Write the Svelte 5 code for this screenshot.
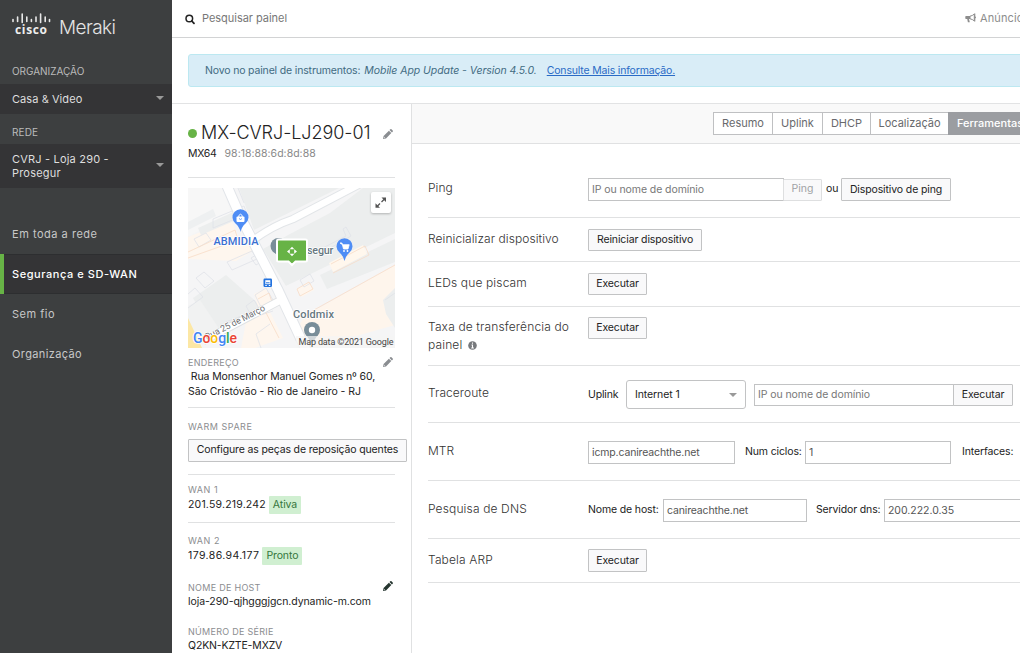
<script>
  const nav = ['Em toda a rede', 'Segurança e SD-WAN', 'Sem fio', 'Organização'];
  const tabs = [
    { name: 'Resumo', w: 60 },
    { name: 'Uplink', w: 51 },
    { name: 'DHCP', w: 49 },
    { name: 'Localização', w: 79 },
    { name: 'Ferramentas', w: 84 }
  ];
  const active = 'Segurança e SD-WAN';
</script>

{#snippet pencil(color)}
  <svg class="pencil" width="10" height="10" viewBox="0 0 10 10" fill={color}>
    <path d="M0 10 .6 7 5.9 1.7 8.300 4.100 3 9.400zM6.500 1.100 7.300.3q.6-.5 1.200 0l1.200 1.200q.5.6 0 1.200l-.8.8z" />
    <path d="M1 8.200l.9.8" stroke="#fff" stroke-width=".7" />
  </svg>
{/snippet}

<div class="page">
  <aside>
    <div class="logo">
      <svg width="110" height="28" viewBox="0 0 110 28">
        <g stroke="#e8e8e8" stroke-width="1.600" stroke-linecap="round">
          <path d="M1 7.500v2M5.600 5v4.500M10.200 2v8.500M14.800 5v4.500M19.400 7.500v2M24 5v4.500M28.600 2v8.500M33.200 5v4.500M37.500 7.500v2" />
        </g>
        <text x="3" y="21.500" class="cisco" textLength="32">cisco</text>
        <text x="47" y="21.500" class="meraki" textLength="57">Meraki</text>
      </svg>
    </div>
    <div class="cap org">ORGANIZAÇÃO</div>
    <div class="pick"><span>Casa &amp; Video</span><i class="caret"></i></div>
    <div class="cap net">REDE</div>
    <div class="pick tall"><span>CVRJ - Loja 290 -<br />Prosegur</span><i class="caret"></i></div>
    <nav>
      {#each nav as item}
        <div class="item" class:active={item === active}>{item}</div>
      {/each}
    </nav>
  </aside>

  <main>
    <header>
      <svg width="11" height="11" viewBox="0 0 11 11" fill="none" stroke="#222">
        <circle cx="4.300" cy="4.500" r="3.300" stroke-width="1.500" />
        <path d="M6.800 7l2.200 2.400" stroke-width="1.800" stroke-linecap="round" />
      </svg>
      <span class="search">Pesquisar painel</span>
      <div class="news">
        <svg width="11" height="10" viewBox="0 0 11 10">
          <path d="M1 3h4v3H4l.8 3.200H2.900L2.200 6H1Q.3 6 .3 5.300V3.700Q.3 3 1 3z" fill="#8d8d8d" />
          <path d="M5 3.200Q7.600 2.800 9.300 1v7Q7.600 6.200 5 5.800z" fill="#fff" stroke="#8d8d8d" stroke-width="1" />
          <path d="M9.800.5v8M10.400 3.700v1.500" stroke="#8d8d8d" />
        </svg>
        <span>Anúncios</span>
      </div>
    </header>

    <div class="bannerwrap">
      <div class="banner">
        <span class="b1">Novo no painel de instrumentos:</span>
        <em>Mobile App Update - Version 4.5.0.</em>
        <u>Consulte Mais informação.</u>
      </div>
    </div>

    <div class="cols">
      <section class="device">
        <div class="title"><i class="dot"></i><h1>MX-CVRJ-LJ290-01</h1>{@render pencil('#8a8d91')}</div>
        <div class="model"><span class="mx">MX64</span><span class="mac">98:18:88:6d:8d:88</span></div>
        <hr />
        <div class="map">
          <svg width="207" height="160" viewBox="0 0 207 160">
            <rect width="207" height="160" fill="#f5f5f6" />
            <path d="M0 0h36l7 25-43 24z" fill="#f7f7f7" />
            <path d="M51 0h100L66 42z" fill="#eceeee" />
            <path d="M175 0h32v52L98 98 75 61l27-15 40-21z" fill="#eceeee" />
            <path d="M0 49l43-17 10 23 17 5-22 13L0 71z" fill="#fef6ee" />
            <path d="M10 40l40-18 3 8-40 17z" fill="#eceeee" />
            <path d="M0 34l25-13 3 7L0 42z" fill="#eef0f1" />
            <path d="M5 110l33-23 35 31-47 31z" fill="#eceeee" />
            <path d="M0 118l12-6 20 30-32 18z" fill="#f1f2f2" />
            <path d="M66 106l12-6 6 15-13 7zM58 134l23-12 14 28-28 10H53z" fill="#fef6ee" />
            <path d="M98 98l109-53v12L112 128z" fill="#f5f5f6" />
            <path d="M132 87l75-36v23l-68 27z" fill="#eceeee" />
            <path d="M117 128l90-51v60l-81 23-19-16z" fill="#fef5ec" />
            <path d="M195 112l12-12v40l-9-14z" fill="#eceeee" />
            <path d="M109 101l12-7 5 8-12 7z" fill="#fef6ee" />
            <path d="M141 75l34-18 4 9-34 18z" fill="#fff7ed" />
            <g fill="none" stroke="#dfe2e8" stroke-width=".8">
              <path d="M6 51l12-6 5 7-12 7zM25 31l31-13 3 8-34 14zM39 74l25-11 5 8-25 11zM8 90l8-6 10 9-9 7zM63 70l5-3 5 7-5 3zM58 118l8-6 6 10-8 7zM67 107l11-7 7 12-12 7zM0 106l7-6 8 9-15 11M38 134l18-7M57 132l28-9M82 136l-14 10 5 14M112 92l10-6 4 7-10 6zM50 0l6 15" />
              <path d="M103 76l28-14 27-14-3-7 3-2 5 9-31 18M197 112l10-7" />
            </g>
            <g fill="none" stroke="#f8dcc6" stroke-width=".8">
              <path d="M0 64l47-22 4 13M0 70l42-15M109 101l12-7 4 7-13 7zM143 76l34-18 4 9-36 18M117 127l90-50M49 134l26-15 16 31M70 111l11-6 3 9-9 6" />
            </g>
            <path d="M39-2L53 30 90 102 119 164" fill="none" stroke="#e2e5e9" stroke-width="11" />
            <path d="M64 53Q84 38 105 31L172-4" fill="none" stroke="#e2e5e8" stroke-width="8.500" />
            <path d="M93 112L15 153" fill="none" stroke="#dfe2e4" stroke-width="8.500" />
            <path d="M39-2L53 30 90 102 119 164" fill="none" stroke="#fff" stroke-width="9" />
            <path d="M64 53Q84 38 105 31L172-4" fill="none" stroke="#fff" stroke-width="6.500" />
            <path d="M95 111L15 153" fill="none" stroke="#fff" stroke-width="6.500" />
            <path d="M0 130l14 30H0z" fill="#fce7a4" />

            <path d="M52.500 44Q51.500 39 47.500 35.500A8 8 0 1 1 57.500 35.500Q53.500 39 52.500 44z" fill="#4f8df5" />
            <rect x="48.500" y="28.500" width="8" height="5.500" rx="1" fill="#fff" />
            <path d="M50.800 29v-1.500q1.700-2.600 3.400 0V29" fill="none" stroke="#fff" stroke-width="1" />
            <path d="M51 30.500q1.500 2 3 0" fill="none" stroke="#4f8df5" stroke-width=".8" />
            <path d="M156.500 73Q155.500 68 151.500 64.500A8 8 0 1 1 161.500 64.500Q157.500 68 156.500 73z" fill="#4f8df5" />
            <path d="M152 55h2l1.500 6h4.500l1.200-4.300h-6.500z" fill="#fff" stroke="#fff" stroke-width=".8" />
            <circle cx="156" cy="63" r=".9" fill="#fff" /><circle cx="159.500" cy="63" r=".9" fill="#fff" />
            <circle cx="90.500" cy="58" r="8" fill="#788d99" />
            <path d="M84 62q5 4 6.500 9l3-6z" fill="#788d99" />
            <rect x="75.500" y="90.500" width="8.500" height="8.500" rx="1.200" fill="#2373df" />
            <rect x="77.300" y="92.200" width="5" height="4" fill="#fff" /><path d="M77.300 97.500h1.500M80.800 97.500h1.500" stroke="#fff" /><path d="M78 94.800h3.600" stroke="#2373df" />
            <circle cx="124" cy="142" r="8" fill="#788d99" />
            <path d="M119 148l5 8 5-8z" fill="#788d99" />
            <circle cx="124" cy="142" r="3.200" fill="#fff" />
            <g class="halo">
              <text x="25.500" y="57" textLength="45" class="place" fill="#3b6fd2">ABMIDIA</text>
              <text x="119" y="66" textLength="26.500" class="place" fill="#66777f">segur</text>
              <text x="105" y="130" textLength="41" class="place" fill="#66777f">Coldmix</text>
              <text transform="translate(19 152) rotate(-27)" textLength="66" class="street">Rua 25 de Março</text>
            </g>
            <path d="M90.500 51.500h27q1.500 0 1.500 1.500v19q0 1.500-1.500 1.500h-10l-3.500 3.500-3.500-3.500H90.500q-1.500 0-1.500-1.500V53q0-1.500 1.500-1.500z" fill="#67b346" stroke="#fff" stroke-width="2" />
            <path d="M104 58.700l2.300 2.500h-4.600zM104 68.300l2.300-2.500h-4.600zM99 63.500l2.800-2.300v4.600zM109 63.500l-2.800-2.300v4.600z" fill="#fff" />
            <circle cx="104" cy="63.500" r=".9" fill="#67b346" />
            <text x="5" y="155" class="google" textLength="44"><tspan fill="#4285f4">G</tspan><tspan fill="#ea4335">o</tspan><tspan fill="#fbbc05">o</tspan><tspan fill="#4285f4">g</tspan><tspan fill="#34a853">l</tspan><tspan fill="#ea4335">e</tspan></text>
            <rect x="108" y="148" width="99" height="12" fill="#f5f5f5" opacity=".7" />
            <text x="110.500" y="157" class="credit" textLength="95">Map data ©2021 Google</text>
            <rect x="183" y="4" width="20" height="21" rx="2" fill="#fff" class="shadow" />
            <path d="M193.500 9.500h4.500v4.500zM187.500 15.300v4.500h4.500z" fill="#555" /><path d="M196.500 11l-3 3M189 18.500l3-3" stroke="#555" stroke-width="1.300" />
          </svg>
        </div>
        <div class="lab addr"><span>ENDEREÇO</span>{@render pencil('#8a8d91')}</div>
        <div class="val address">&nbsp;Rua Monsenhor Manuel Gomes nº 60,<br /><span class="city">São Cristóvão - Rio de Janeiro - RJ</span></div>
        <hr />
        <div class="lab spare">WARM SPARE</div>
        <button class="sparebtn">Configure as peças de reposição quentes</button>
        <hr class="h3" />
        <div class="lab wan1">WAN 1</div>
        <div class="val wan"><span>201.59.219.242</span><b>Ativa</b></div>
        <hr class="h4" />
        <div class="lab wan2">WAN 2</div>
        <div class="val wan"><span class="ip2">179.86.94.177</span><b>Pronto</b></div>
        <div class="lab host"><span>NOME DE HOST</span>{@render pencil('#25352f')}</div>
        <div class="val hostname">loja-290-qjhgggjgcn.dynamic-m.com</div>
        <div class="lab serial">NÚMERO DE SÉRIE</div>
        <div class="val sn">Q2KN-KZTE-MXZV</div>
      </section>

      <section class="tools">
        <div class="tabbar">
          {#each tabs as t}
            <div class="tab" class:on={t.name === 'Ferramentas'} style="width:{t.w}px">{t.name}</div>
          {/each}
        </div>
        <div class="rows">
          <div class="row r1"><label>Ping</label>
            <div class="ctl"><div class="inp ph w196">IP ou nome de domínio</div><button class="off">Ping</button><span class="ou">ou</span><button class="w110 t23">Dispositivo de ping</button></div>
          </div>
          <div class="row r2"><label>Reinicializar dispositivo</label><div class="ctl"><button class="w114">Reiniciar dispositivo</button></div></div>
          <div class="row r3"><label>LEDs que piscam</label><div class="ctl"><button class="run">Executar</button></div></div>
          <div class="row r4"><label>Taxa de transferência do painel
              <svg class="info" width="9" height="9" viewBox="0 0 9 9"><circle cx="4.500" cy="4.500" r="4.300" fill="#77797c" /><path d="M4.500 1.500v1.300M3.500 4h1v3M3.200 7h2.700" stroke="#fff" stroke-width="1.100" fill="none" /></svg></label>
            <div class="ctl"><button class="run">Executar</button></div></div>
          <div class="row r5"><label>Traceroute</label>
            <div class="ctl"><span class="upl">Uplink</span><div class="select">Internet 1<i class="caret"></i></div><div class="inp ph w200">IP ou nome de domínio</div><button class="run join">Executar</button></div>
          </div>
          <div class="row r6"><label>MTR</label>
            <div class="ctl"><div class="inp w147 icmp">icmp.canireachthe.net</div><span class="num">Num ciclos:</span><div class="inp w146">1</div><span class="ifs">Interfaces:</span></div>
          </div>
          <div class="row r7"><label>Pesquisa de DNS</label>
            <div class="ctl"><span class="hn">Nome de host:</span><div class="inp w144 icmp">canireachthe.net</div><span class="sd">Servidor dns:</span><div class="inp w146">200.222.0.35</div></div>
          </div>
          <div class="row r8"><label>Tabela ARP</label><div class="ctl"><button class="run">Executar</button></div></div>
        </div>
      </section>
    </div>
  </main>
</div>

<style>
  :global(body) { margin: 0; overflow: hidden; }
  .page { display: flex; width: 1020px; height: 653px; overflow: hidden; font: 11px/14px Inter, sans-serif; color: #222; background: #fff; white-space: nowrap; }
  .page * { box-sizing: border-box; }
  svg { display: block; flex: none; }
  aside { width: 172px; flex: none; background: #3d3f40; color: #d4d4d4; }
  .logo { height: 64px; padding: 12px 0 0 12px; }
  .cisco { font: 700 12px 'Open Sans', sans-serif; fill: #eee; }
  .meraki { font: 300 19px Inter, sans-serif; fill: #e4e4e4; }
  .cap { padding-left: 12px; font-size: 10px; color: #bbb; letter-spacing: -.03px; }
  .org { height: 20px; }
  .net { height: 30px; line-height: 37px; letter-spacing: .15px; }
  .pick { display: flex; align-items: center; justify-content: space-between; height: 30px; padding: 0 8px 0 12px; background: #343436; letter-spacing: .07px; color: #dedede; }
  .tall { height: 44px; padding-bottom: 1px; letter-spacing: .19px; }
  .pick .caret { position: relative; top: -1px; }
  .caret { width: 0; border: 4px solid transparent; border-top-color: #999; border-bottom: 0; }
  nav { padding-top: 26px; }
  .item { height: 40px; padding-left: 12px; line-height: 40px; letter-spacing: .52px; color: #c8c8c8; }
  .item:last-child { letter-spacing: .38px; }
  .item.active { padding-left: 8px; border-left: 4px solid #67b346; background: #343436; color: #fff; font-weight: 500; letter-spacing: .56px; box-shadow: inset 0 1px #2d2e30, inset 0 -1px #2d2e30; }

  main { width: 848px; flex: none; }
  header { display: flex; align-items: center; height: 38px; padding: 0 0 1px 13px; border-bottom: 1px solid #d2d3d4; }
  .search { margin-left: 6px; color: #777; letter-spacing: -.03px; }
  header > svg { margin-top: 2px; }
  .news { display: flex; align-items: center; gap: 4px; width: 55px; margin-left: auto; color: #8d8d8d; letter-spacing: .1px; overflow: hidden; }
  .bannerwrap { height: 66px; padding: 16px 0 0 16px; border-bottom: 1px solid #e2e3e4; }
  .banner { display: flex; height: 33px; margin-right: -6px; padding-left: 16px; line-height: 31px; background: #d9edf7; border: 1px solid #bce8f1; border-radius: 3px; color: #426b82; font-size: 10.500px; letter-spacing: -.16px; }
  .banner em { margin-left: 4px; letter-spacing: -.06px; }
  .banner u { margin-left: 10px; color: #2a6bc6; letter-spacing: -.17px; }
  .cols { display: flex; height: 549px; }
  .device { width: 240px; flex: none; padding: 0 16px; border-right: 1px solid #e0e1e2; font-size: 10.500px; }
  hr { height: 1px; margin: 0; border: 0; background: #e0e1e2; }
  .title { display: flex; align-items: center; padding-top: 17px; height: 41px; }
  .dot { width: 9px; height: 9px; margin-top: 1px; border-radius: 50%; background: #67b346; }
  h1 { margin: 0 0 0 4px; width: 182px; font: 300 18px/22px Inter, sans-serif; letter-spacing: -.05px; color: #222; }
  .title .pencil { margin-top: 1px; }
  .model { display: flex; height: 32px; line-height: 17px; }
  .mx { letter-spacing: -.25px; }
  .mac { margin-left: 8px; color: #888; letter-spacing: .02px; }
  .map { margin-top: 10px; height: 160px; }
  .place { font: 500 11px Roboto, sans-serif; }
  .street { font: 9px Roboto, sans-serif; fill: #6d6f73; }
  .halo text { paint-order: stroke; stroke: #fff; stroke-width: 1.500px; stroke-linejoin: round; }
  .google { font: 500 14px Roboto, sans-serif; paint-order: stroke; stroke: #fff; stroke-width: 1.500px; }
  .credit { font: 9px Roboto, sans-serif; fill: #444; }
  .shadow { filter: drop-shadow(0 1px 1px rgba(0,0,0,.25)); }
  .lab { display: flex; justify-content: space-between; font-size: 9px; line-height: 13px; color: #8b8d90; letter-spacing: .28px; }
  .device .lab .pencil { margin-right: 2px; }
  .addr { padding-top: 8px; height: 21px; }
  .addr .pencil { margin-top: 1px; }
  .address { line-height: 15px; height: 38px; letter-spacing: -.12px; }
  .city { letter-spacing: -.04px; }
  .spare { margin-top: 12px; height: 19px; letter-spacing: .5px; }
  button { height: 22px; padding: 0; border: 1px solid #c2c3c4; border-radius: 1px; background: #f9f9fa; font: 10.500px/18px Inter, sans-serif; letter-spacing: -.12px; color: #222; flex: none; }
  .sparebtn { display: block; width: 219px; height: 23px; padding-bottom: 2px; letter-spacing: -.14px; }
  .h3 { margin-top: 12px; }
  .wan1 { margin-top: 8px; height: 13px; letter-spacing: .5px; }
  .wan { display: flex; align-items: center; height: 18px; letter-spacing: .19px; }
  .ip2 { letter-spacing: .4px; }
  .wan b { margin-left: 3px; padding: 0 4px; height: 18px; line-height: 17px; font-weight: 400; letter-spacing: -.1px; background: #d0efd1; color: #35763c; border-radius: 1px; }
  .h4 { margin-top: 8px; }
  .wan2 { margin-top: 11px; height: 13px; letter-spacing: .5px; }
  .host { margin-top: 16px; height: 14px; letter-spacing: .28px; }
  .hostname { letter-spacing: -.08px; }
  .sn { letter-spacing: -.15px; }
  .serial { margin-top: 16px; height: 14px; }

  .tools { flex: 1; min-width: 0; overflow: hidden; }
  .tabbar { display: flex; height: 40px; padding: 8px 0 0 301px; background: #f9f9f9; border-bottom: 1px solid #e0e1e2; }
  .tab { flex: none; height: 23px; margin-right: -1px; border: 1px solid #bfc0c2; background: #fff; color: #68696c; line-height: 21px; text-align: center; }
  .tabbar .on { background: #9b9da1; border-color: #9b9da1; color: #fff; font-weight: 500; }
  .rows { padding-left: 16px; font-size: 10.500px; }
  .row { display: flex; border-bottom: 1px solid #e0e1e2; }
  label { width: 160px; flex: none; white-space: normal; padding-right: 10px; font: 300 12px/18px Inter, sans-serif; letter-spacing: .07px; color: #333; }
  .r3 label, .r4 label, .r7 label, .r8 label { letter-spacing: .14px; }
  .info { display: inline-block; margin-left: 2px; vertical-align: -1px; }
  .ctl { display: flex; align-items: flex-start; flex: 1; min-width: 0; }
  .r1 { height: 74px; } .r1 label { padding-top: 35px; } .r1 .ctl { padding-top: 34px; }
  .r2 { height: 44px; } .r3 { height: 45px; } .r8 { height: 44px; }
  .r2 label, .r3 label, .r8 label { padding-top: 12px; }
  .r2 .ctl, .r3 .ctl { padding-top: 11px; }
  .r8 .ctl { padding-top: 10px; } .r8 .run { height: 23px; }
  .r4 { height: 59px; } .r4 label { padding-top: 11px; } .r4 .ctl { padding-top: 10px; }
  .r5 { height: 57px; } .r5 label { padding-top: 18px; } .r5 .ctl { padding-top: 14px; }
  .r6, .r7 { height: 58px; } .r6 label, .r7 label { padding-top: 19px; } .r6 .ctl, .r7 .ctl { padding-top: 18px; }
  .inp { flex: none; height: 23px; padding: 0 3px; border: 1px solid #c2c3c4; background: #fff; line-height: 21px; letter-spacing: -.03px; color: #555; }
  .ph { color: #777; letter-spacing: -.08px; }
  .icmp { letter-spacing: -.15px; }
  .ctl > span { flex: none; line-height: 21px; letter-spacing: -.14px; }
  .w196 { width: 196px; }
  .off { width: 39px; height: 22px; margin: 1px 0 0 -1px; padding-bottom: 2px; border-color: #dedfe0; color: #a0a2a5; letter-spacing: 0; }
  .ou { width: 19px; padding-left: 4px; }
  .w110 { width: 110px; } .t23 { height: 23px; line-height: 19px; } .w114 { width: 114px; }
  .run { width: 59px; }
  .upl { width: 38px; padding-top: 4px; }
  .select { display: flex; align-items: center; justify-content: space-between; width: 120px; height: 29px; padding: 0 8px; border: 1px solid #c2c3c4; border-radius: 3px; letter-spacing: -.1px; }
  .w200 { width: 200px; height: 22px; margin: 4px 0 0 8px; line-height: 19px; }
  .join { width: 60px; margin: 4px 0 0 -1px; }
  .w147 { width: 147px; } .w146 { width: 146px; } .w144 { width: 144px; }
  .num { width: 70px; padding-left: 10px; }
  .ifs { padding-left: 11px; }
  .hn { width: 75px; }
  .sd { width: 77px; padding-left: 9px; }
</style>
